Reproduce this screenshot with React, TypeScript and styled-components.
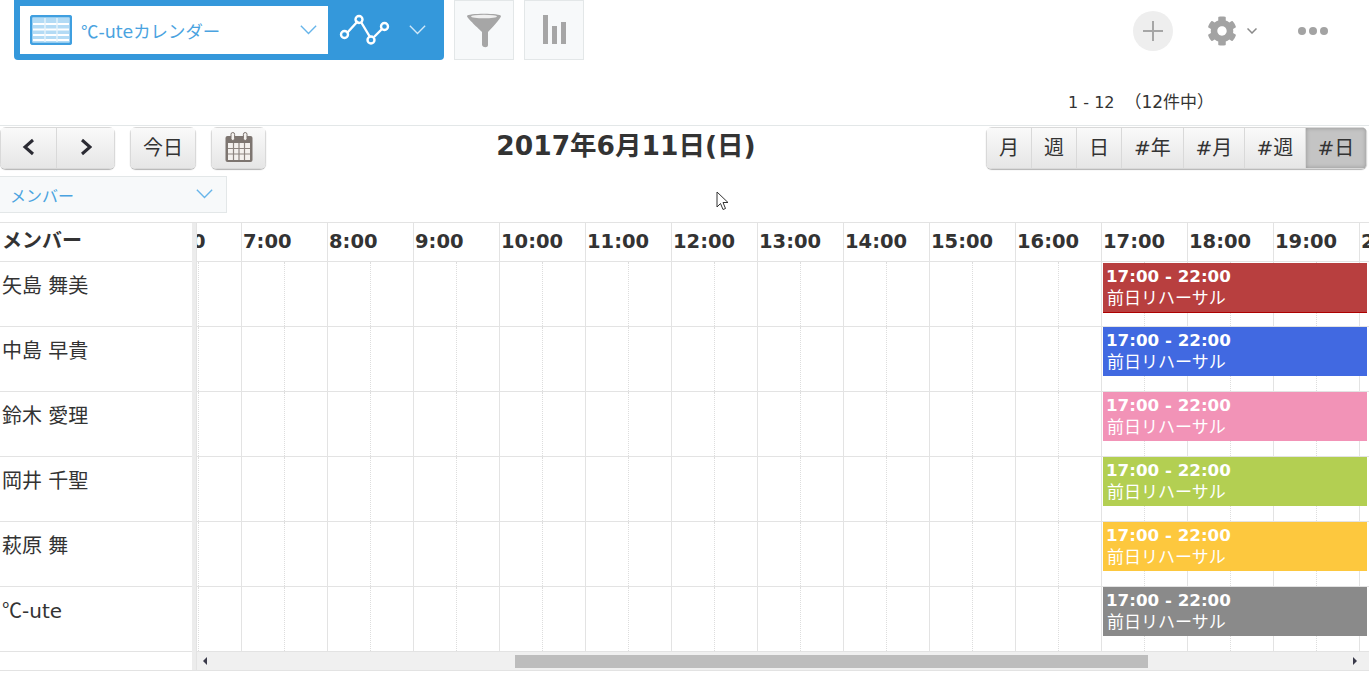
import { FaCog } from "react-icons/fa";
import styled, { createGlobalStyle } from "styled-components";

const FONT = '"DejaVu Sans", "Noto Sans CJK JP", sans-serif';
const HOUR_WIDTH = 86;
const HOURS = [6, 7, 8, 9, 10, 11, 12, 13, 14, 15, 16, 17, 18, 19, 20];

const MEMBERS = [
  { name: "矢島 舞美", color: "#b83f3f", edge: "#ad0000" },
  { name: "中島 早貴", color: "#4169e1" },
  { name: "鈴木 愛理", color: "#f293b7" },
  { name: "岡井 千聖", color: "#b3cf52" },
  { name: "萩原 舞", color: "#fdc83e" },
  { name: "-ute", color: "#8a8a8a", celsius: true },
];

const VIEWS = [
  { label: "月", width: 46 },
  { label: "週", width: 45 },
  { label: "日", width: 45 },
  { label: "#年", width: 62 },
  { label: "#月", width: 61 },
  { label: "#週", width: 61 },
  { label: "#日", width: 61 },
];

const GlobalStyle = createGlobalStyle`
  html, body {
    margin: 0;
    background: #fff;
    overflow: hidden;
  }
  body {
    font-family: ${FONT};
    color: #333;
  }
`;

const Page = styled.div`
  width: 1369px;
  height: 685px;
  position: relative;
  overflow: hidden;
`;

const Header = styled.header`
  display: flex;
  height: 60px;
  padding: 0 41px 0 14px;
`;

const AppBar = styled.div`
  display: flex;
  align-items: center;
  width: 430px;
  height: 60px;
  background: #3498db;
  border-radius: 0 0 4px 4px;
  padding-left: 6px;
  box-sizing: border-box;
`;

const ViewPicker = styled.div`
  display: flex;
  align-items: center;
  width: 308px;
  height: 48px;
  background: #fff;
  padding: 0 11px 0 10px;
  box-sizing: border-box;
`;

const ViewName = styled.span`
  flex: 1;
  margin-left: 9px;
  font-size: 17.4px;
  color: #4aa3e0;
`;

const Celsius = styled.span`
  font-family: "Noto Sans CJK JP", sans-serif;
  font-weight: 400;
  line-height: 1;
`;

const GraphPicker = styled.div`
  display: flex;
  align-items: center;
  gap: 18px;
  margin-left: 11px;
`;

const ToolButton = styled.div`
  display: flex;
  align-items: center;
  justify-content: center;
  width: 60px;
  height: 60px;
  margin-left: 10px;
  background: #f7f9fa;
  border: 1px solid #e3e7e8;
  box-sizing: border-box;
`;

const HeaderActions = styled.div`
  display: flex;
  align-items: center;
  margin-left: auto;
  height: 62px;
`;

const AddButton = styled.div`
  display: flex;
  align-items: center;
  justify-content: center;
  width: 40px;
  height: 40px;
  border-radius: 50%;
  background: #eee;
  margin-right: 34px;
`;

const GearIcon = styled(FaCog)`
  width: 30px;
  height: 30px;
  color: #a3a3a3;
  margin-right: 10px;
`;

const Dots = styled.div`
  display: flex;
  gap: 3px;
  margin-left: 41px;
`;

const Dot = styled.span`
  width: 8px;
  height: 8px;
  border-radius: 50%;
  background: #a3a3a3;
`;

const Pager = styled.div`
  height: 65px;
  padding: 31px 0 0 1068px;
  box-sizing: border-box;
  font-size: 16px;
  line-height: 22px;
  white-space: pre;
`;

const PagerTotal = styled.span`
  margin-left: 10px;
  font-size: 17px;
`;

const Toolbar = styled.div`
  display: flex;
  justify-content: space-between;
  height: 51px;
  padding-top: 1px;
  padding-right: 2px;
  border-top: 1px solid #e3e7e8;
  box-sizing: border-box;
`;

const ToolbarGroup = styled.div`
  display: flex;
  gap: 15px;
  height: 42px;
`;

const ButtonGroup = styled.div`
  display: flex;
  height: 42px;
  border-radius: 6px;
  box-shadow: 0 1px 1px rgba(0, 0, 0, 0.3);
  overflow: hidden;
`;

const NavButton = styled.div<{ $width: number; $active?: boolean }>`
  display: flex;
  align-items: center;
  justify-content: center;
  width: ${(p) => p.$width}px;
  height: 42px;
  padding-bottom: 3px;
  box-sizing: border-box;
  font-size: 20px;
  color: #333;
  background: ${(p) => (p.$active ? "#c4c4c4" : "linear-gradient(#fafafa, #e6e6e6)")};
  box-shadow: ${(p) => (p.$active ? "inset 0 0 4px rgba(0, 0, 0, 0.25)" : "none")};
  border: 1px solid #d9d9d9;
  border-width: 1px 1px 1px 0;
  &:first-child {
    border-left-width: 1px;
  }
`;

const Title = styled.h1`
  margin: 1px 0 0;
  font-size: 26.5px;
  font-weight: 700;
  line-height: 36px;
  color: #333;
`;

const FilterRow = styled.div`
  height: 46px;
`;

const MemberSelect = styled.div`
  display: flex;
  align-items: center;
  justify-content: space-between;
  width: 227px;
  height: 37px;
  padding: 0 13px 0 10px;
  background: #f7f9fa;
  border: 1px solid #e3e7e8;
  border-left: none;
  box-sizing: border-box;
  font-size: 16px;
  color: #4aa3e0;
`;

const Table = styled.div`
  display: flex;
  height: 449px;
  border-top: 1px solid #e3e3e3;
  border-bottom: 1px solid #e3e3e3;
  box-sizing: border-box;
`;

const NameColumn = styled.div`
  width: 192px;
  flex: none;
`;

const NameHead = styled.div`
  height: 38px;
  padding-left: 2px;
  border-bottom: 1px solid #e3e3e3;
  font-size: 20px;
  font-weight: 700;
  line-height: 37px;
`;

const NameCell = styled.div`
  height: 52px;
  padding: 12px 0 0 2px;
  border-bottom: 1px solid #e3e3e3;
  font-size: 20px;
  line-height: 24px;
`;

const Splitter = styled.div`
  width: 5px;
  flex: none;
  background: #ececec;
  border-right: 1px solid #e3e3e3;
  box-sizing: border-box;
`;

const Timeline = styled.div`
  flex: 1;
  min-width: 0;
  overflow: hidden;
`;

const Track = styled.div<{ $height: number }>`
  position: relative;
  display: flex;
  width: ${HOURS.length * HOUR_WIDTH}px;
  height: ${(p) => p.$height}px;
  margin-left: -41px;
  border-bottom: 1px solid #e3e3e3;
`;

const HourHead = styled.div`
  flex: none;
  width: ${HOUR_WIDTH}px;
  padding-left: 1px;
  border-right: 1px solid #e3e3e3;
  box-sizing: border-box;
  font-size: 19.5px;
  font-weight: 700;
  line-height: 37px;
  white-space: nowrap;
`;

const HourCell = styled.div`
  flex: none;
  display: flex;
  width: ${HOUR_WIDTH}px;
  border-right: 1px solid #e3e3e3;
  box-sizing: border-box;
`;

const HalfCell = styled.div`
  width: 43px;
  height: 100%;
  border-right: 1px dotted #ddd;
  box-sizing: border-box;
`;

const EventBar = styled.div<{ $color: string; $edge?: string }>`
  position: absolute;
  top: ${(p) => (p.$edge ? 1 : 0)}px;
  left: ${(17 - 6) * HOUR_WIDTH + 1}px;
  width: 264px;
  height: ${(p) => (p.$edge ? 50 : 49)}px;
  padding: 2px 0 0 3px;
  background: ${(p) => p.$color};
  border-bottom: ${(p) => (p.$edge ? `1px solid ${p.$edge}` : "none")};
  box-sizing: border-box;
  color: #fff;
  font-size: 17px;
  line-height: 22px;
`;

const EventTime = styled.div`
  font-weight: 700;
  font-size: 16.7px;
`;

const EventName = styled.div`
  padding-left: 1px;
`;

const ScrollBar = styled.div`
  display: flex;
  align-items: center;
  height: 18px;
  background: #f0f0f0;
`;

const ScrollArrow = styled.span<{ $right?: boolean }>`
  width: 0;
  height: 0;
  border-style: solid;
  border-width: 4px 0 4px 4px;
  border-color: transparent transparent transparent #3a3a4a;
  margin-left: ${(p) => (p.$right ? "205px" : "6px")};
  transform: ${(p) => (p.$right ? "none" : "rotate(180deg)")};
`;

const ScrollThumb = styled.div`
  width: 633px;
  height: 13px;
  margin-left: 308px;
  background: #bdbdbd;
`;

const Cursor = styled.svg`
  position: absolute;
  left: 716px;
  top: 191px;
`;

function Chevron({
  size = 17,
  color = "#67b5ea",
  weight = 1.6,
}: {
  size?: number;
  color?: string;
  weight?: number;
}) {
  return (
    <svg width={size} height={size * 0.6} viewBox="0 0 20 12" fill="none">
      <path d="M1 1l9 9 9-9" stroke={color} strokeWidth={weight} />
    </svg>
  );
}

function TableIcon() {
  return (
    <svg width="42" height="30" viewBox="0 0 42 30">
      <rect x="1" y="1" width="40" height="28" rx="2" fill="#b3dbf5" stroke="#3f9fe0" strokeWidth="2.4" />
      <path d="M3 9h36M3 14.500h36M3 20h36M3 25h36" stroke="#fff" strokeWidth="1.8" />
      <path d="M15 3v24M27 3v24" stroke="#e4f2fb" strokeWidth="1.4" />
    </svg>
  );
}

function GraphIcon() {
  return (
    <svg width="52" height="34" viewBox="0 0 52 34" fill="none" stroke="#fff" strokeWidth="2.4">
      <path d="M8 20L19 8M22 9l9 15M35 24l8-8" />
      <circle cx="5.5" cy="21.5" r="3.5" />
      <circle cx="20" cy="6.5" r="3.5" />
      <circle cx="32" cy="27" r="3.5" />
      <circle cx="45.5" cy="13.5" r="3.5" />
    </svg>
  );
}

function FunnelIcon() {
  return (
    <svg width="36" height="36" viewBox="0 0 36 36">
      <path
        d="M1 4c0-3 34-3 34 0 0 2-10 13-13 16v13c0 3-5 3-6 0V20C13 17 1 6 1 4z"
        fill="#a6a6a6"
      />
      <ellipse cx="18" cy="4.5" rx="13" ry="1.8" fill="#f0f0f0" />
    </svg>
  );
}

function BarsIcon() {
  return (
    <svg width="25" height="30" viewBox="0 0 25 30" fill="#a6a6a6">
      <rect x="1" y="0" width="5" height="29" />
      <rect x="10" y="11" width="5" height="18" />
      <rect x="19" y="7" width="5" height="22" />
    </svg>
  );
}

function PlusIcon() {
  return (
    <svg width="20" height="20" viewBox="0 0 20 20">
      <path d="M10 0v20M0 10h20" stroke="#a6a6a6" strokeWidth="2" />
    </svg>
  );
}

function ArrowIcon({ right }: { right?: boolean }) {
  return (
    <svg width="14" height="18" viewBox="0 0 14 18" fill="none">
      <path
        d={right ? "M3 2l8 7-8 7" : "M11 2L3 9l8 7"}
        stroke="#2b2b33"
        strokeWidth="3"
      />
    </svg>
  );
}

function CalendarIcon() {
  return (
    <svg width="28" height="32" viewBox="0 0 28 32">
      <rect x="0.5" y="5" width="27" height="26" rx="2" fill="#7d7570" />
      <rect x="3" y="12" width="22" height="17" fill="#f4f1ee" />
      <path d="M3 17.5h22M3 23h22M8.5 12v17M14 12v17M19.5 12v17" stroke="#8d8580" strokeWidth="1.2" />
      <rect x="6" y="1.5" width="3.6" height="8" rx="1.8" fill="#f4f1ee" stroke="#7d7570" />
      <rect x="18.4" y="1.5" width="3.6" height="8" rx="1.8" fill="#f4f1ee" stroke="#7d7570" />
    </svg>
  );
}

export default function App() {
  return (
    <Page>
      <GlobalStyle />
      <Header>
        <AppBar>
          <ViewPicker>
            <TableIcon />
            <ViewName>
              <Celsius>℃</Celsius>-uteカレンダー
            </ViewName>
            <Chevron />
          </ViewPicker>
          <GraphPicker>
            <GraphIcon />
            <Chevron color="#cfe8f9" />
          </GraphPicker>
        </AppBar>
        <ToolButton>
          <FunnelIcon />
        </ToolButton>
        <ToolButton>
          <BarsIcon />
        </ToolButton>
        <HeaderActions>
          <AddButton>
            <PlusIcon />
          </AddButton>
          <GearIcon />
          <Chevron size={10} color="#8a8a8a" weight={3} />
          <Dots>
            <Dot />
            <Dot />
            <Dot />
          </Dots>
        </HeaderActions>
      </Header>

      <Pager>
        1 - 12<PagerTotal>（12件中）</PagerTotal>
      </Pager>

      <Toolbar>
        <ToolbarGroup>
          <ButtonGroup>
            <NavButton $width={57}>
              <ArrowIcon />
            </NavButton>
            <NavButton $width={58}>
              <ArrowIcon right />
            </NavButton>
          </ButtonGroup>
          <ButtonGroup>
            <NavButton $width={66}>今日</NavButton>
          </ButtonGroup>
          <ButtonGroup>
            <NavButton $width={55}>
              <CalendarIcon />
            </NavButton>
          </ButtonGroup>
        </ToolbarGroup>
        <Title>2017年6月11日(日)</Title>
        <ButtonGroup>
          {VIEWS.map((view) => (
            <NavButton key={view.label} $width={view.width} $active={view.label === "#日"}>
              {view.label}
            </NavButton>
          ))}
        </ButtonGroup>
      </Toolbar>

      <FilterRow>
        <MemberSelect>
          メンバー
          <Chevron />
        </MemberSelect>
      </FilterRow>

      <Table>
        <NameColumn>
          <NameHead>メンバー</NameHead>
          {MEMBERS.map((member) => (
            <NameCell key={member.name}>
              {member.celsius && <Celsius>℃</Celsius>}
              {member.name}
            </NameCell>
          ))}
        </NameColumn>
        <Splitter />
        <Timeline>
          <Track $height={38}>
            {HOURS.map((hour) => (
              <HourHead key={hour}>{hour}:00</HourHead>
            ))}
          </Track>
          {MEMBERS.map((member) => (
            <Track key={member.name} $height={64}>
              {HOURS.map((hour) => (
                <HourCell key={hour}>
                  <HalfCell />
                </HourCell>
              ))}
              <EventBar $color={member.color} $edge={member.edge}>
                <EventTime>17:00 - 22:00</EventTime>
                <EventName>前日リハーサル</EventName>
              </EventBar>
            </Track>
          ))}
          <ScrollBar>
            <ScrollArrow />
            <ScrollThumb />
            <ScrollArrow $right />
          </ScrollBar>
        </Timeline>
      </Table>

      <Cursor width="13" height="20" viewBox="0 0 13 20">
        <path d="M1 1v15l3.5-3.5 2.5 6 2.5-1-2.5-6H12z" fill="#fff" stroke="#333" strokeWidth="1" />
      </Cursor>
    </Page>
  );
}
